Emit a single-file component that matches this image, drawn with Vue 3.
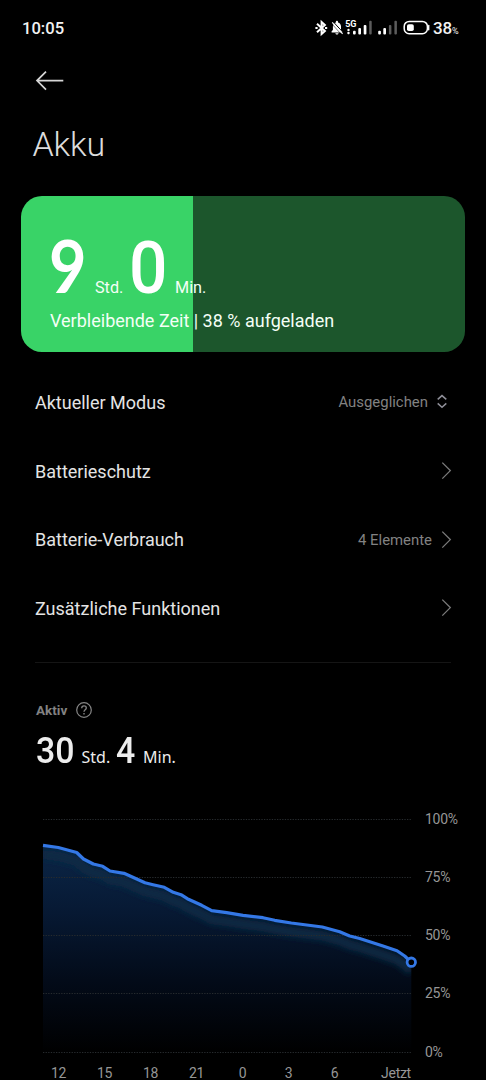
<script setup>
const rows = [
  { label: 'Aktueller Modus', value: 'Ausgeglichen', picker: true },
  { label: 'Batterieschutz', value: '' },
  { label: 'Batterie-Verbrauch', value: '4 Elemente' },
  { label: 'Zusätzliche Funktionen', value: '' },
]

const grid = [
  { y: 20, label: '100%' },
  { y: 78, label: '75%' },
  { y: 136, label: '50%' },
  { y: 194, label: '25%' },
  { y: 253, label: '0%' },
]

const hours = [
  { x: 58.5, label: '12' },
  { x: 104.5, label: '15' },
  { x: 150.5, label: '18' },
  { x: 196.5, label: '21' },
  { x: 242.5, label: '0' },
  { x: 288.5, label: '3' },
  { x: 334.5, label: '6' },
  { x: 396, label: 'Jetzt' },
]

const points = [
  [43, 45.4], [58.3, 47.5], [76.7, 52.5], [83.5, 59], [93.3, 64], [102.7, 66.3],
  [110, 71], [124, 73.3], [145, 82.7], [153, 84.7], [164.3, 87.3], [173.3, 92.3],
  [181, 94.7], [187.3, 98.7], [201.7, 105.3], [211.7, 110.7], [226.7, 112.6],
  [243, 115.3], [263, 117.7], [274.7, 120.3], [291.3, 123], [322.3, 127],
  [339.7, 131.7], [349.7, 136], [359.7, 138.5], [383, 146], [397, 150.7],
  [404.7, 156], [411.3, 162.3],
]
const line = 'M' + points.map((p) => p.join(' ')).join(' L')
const area = line + ' L411.3 253 L43 253 Z'
</script>

<template>
  <main class="screen">
    <header class="status">
      <span class="clock">10:05</span>
      <svg class="status-icons" width="116" height="22" viewBox="0 0 116 22">
        <path d="M2 6.8L9.9 14L6.6 17V5L9.9 8L2 15.2" fill="none" stroke="#fff" stroke-width="2" />
        <path d="M0.4 9.9h2.2v2.2h-2.2zM10 9.9h2.2v2.2h-2.2z" fill="#fff" />
        <path d="M16.6 15.6v-1.4l1.3-1.3V9.6c0-2.3 1.1-3.8 3-4.2V4.8c0-1.4 2.1-1.4 2.1 0v.6c1.9.4 3 1.9 3 4.2v3.3l1.3 1.3v1.4zM20.4 16.2h3.1c0 1.8-3.1 1.8-3.1 0z" fill="#fff" />
        <path d="M18.6 5.2L28 15.4" stroke="#000" stroke-width="1" />
        <path d="M17.2 5.4L27.6 16.8" stroke="#fff" stroke-width="1.1" />
        <path d="M16.4 6.4L25.8 16.8" stroke="#000" stroke-width=".5" />
        <text x="30.2" y="10" class="net">5G</text>
        <g fill="#fff">
          <circle cx="33.5" cy="12.9" r="1.2" />
          <rect x="32.4" y="14.7" width="2.2" height="2.6" rx=".8" />
          <rect x="38" y="13.8" width="2.7" height="3.7" rx="1" />
          <rect x="43.3" y="11" width="2.7" height="6.5" rx="1" />
          <rect x="48.7" y="8" width="2.7" height="9.5" rx="1" />
          <rect x="54.2" y="3.8" width="2.5" height="13.7" rx="1" opacity=".36" />
          <rect x="63.2" y="13.8" width="2.7" height="3.7" rx="1" />
          <rect x="68.3" y="11" width="2.7" height="6.5" rx="1" />
          <rect x="73.9" y="8" width="2.5" height="9.5" rx="1" opacity=".36" />
          <rect x="79.4" y="3.8" width="2.5" height="13.7" rx="1" opacity=".36" />
        </g>
        <rect x="89.2" y="4.4" width="23.2" height="12.4" rx="5" fill="none" stroke="#fff" stroke-width="1.5" />
        <rect x="92" y="7.2" width="6.8" height="6.8" rx="1.8" fill="#fff" />
        <path d="M113.7 8.5v4.2" stroke="#fff" stroke-width="1.4" stroke-linecap="round" />
      </svg>
      <span class="charge">38<small>%</small></span>
    </header>

    <svg class="back" width="30" height="22" viewBox="0 0 30 22">
      <path d="M28.3 10.6H2M11 1.6L2 10.6l9 9" fill="none" stroke="#d6d6d6" stroke-width="1.7" />
    </svg>
    <h1>Akku</h1>

    <section class="battery">
      <p class="remaining">
        <b class="first">9</b><span class="std">Std.</span><b class="second">0</b><span class="min">Min.</span>
      </p>
      <p class="note">Verbleibende Zeit | 38 % aufgeladen</p>
    </section>

    <ul class="rows">
      <li v-for="row in rows" :key="row.label">
        <span class="label">{{ row.label }}</span>
        <span class="value">{{ row.value }}</span>
        <svg v-if="row.picker" class="picker" width="12" height="16" viewBox="0 0 12 16">
          <path d="M1.7 5.4L6 1.6l4.3 3.8M1.7 9.4l4.3 3.8 4.3-3.8" fill="none" stroke="#8f8f99" stroke-width="1.5" />
        </svg>
        <svg v-else class="chevron" width="12" height="18" viewBox="0 0 12 18">
          <path d="M1.3 0.6L9.3 8.6l-8 8" fill="none" stroke="#7b7b7b" stroke-width="1.3" />
        </svg>
      </li>
    </ul>

    <div class="divider"></div>

    <section class="active">
      <h2>
        Aktiv
        <svg width="18" height="18" viewBox="0 0 18 18" fill="none" stroke="#858585">
          <circle cx="9" cy="9" r="7.3" stroke-width="1.2" />
          <path d="M6.7 7.2c0-1.4.9-2.3 2.3-2.3s2.3.9 2.3 2.1c0 1.7-2.3 1.9-2.3 3.8" stroke-width="1.3" />
          <path d="M9 12v1.5" stroke-width="1.4" />
        </svg>
      </h2>
      <p class="duration">
        <b class="days">30</b><span class="std">Std.</span><b class="minutes">4</b><span class="min">Min.</span>
      </p>
    </section>

    <svg class="chart" width="486" height="280" viewBox="0 0 486 280">
      <defs>
        <linearGradient id="fill" gradientUnits="userSpaceOnUse" x1="0" y1="45" x2="0" y2="253">
          <stop offset="0" stop-color="#0b2647" />
          <stop offset=".3" stop-color="#071a35" />
          <stop offset=".65" stop-color="#030b19" />
          <stop offset="1" stop-color="#000" />
        </linearGradient>
        <clipPath id="under"><path :d="area" /></clipPath>
        <filter id="soft" x="-10%" y="-20%" width="120%" height="140%">
          <feGaussianBlur stdDeviation="3" />
        </filter>
      </defs>
      <path :d="area" fill="url(#fill)" />
      <g clip-path="url(#under)">
        <path class="glow" :d="line" transform="translate(0 9)" filter="url(#soft)" />
      </g>
      <g class="grid">
        <path v-for="g in grid" :key="g.y" :d="`M43 ${g.y - 0.5}H412`" />
      </g>
      <path class="curve" :d="line" />
      <circle cx="411.3" cy="162.2" r="4.2" fill="#000" stroke="#3478e6" stroke-width="2.8" />
      <g class="axis">
        <text v-for="g in grid" :key="g.label" x="425" :y="g.y + 3.7">{{ g.label }}</text>
        <text v-for="h in hours" :key="h.label" :x="h.x" y="278" text-anchor="middle">{{ h.label }}</text>
      </g>
    </svg>
  </main>
</template>

<style>
html,
body {
  background: #000;
  overflow: hidden;
}
</style>

<style scoped>
.screen {
  width: 486px;
  height: 1080px;
  overflow: hidden;
  display: flex;
  flex-direction: column;
  background: #000;
  color: #e4e4e4;
  font-family: Roboto, "Liberation Sans", sans-serif;
}
.screen > * {
  flex: none;
}
h1,
h2,
p,
ul {
  margin: 0;
  padding: 0;
  font-weight: 400;
}
.status {
  height: 56px;
  display: flex;
  align-items: center;
  padding-left: 22px;
}
.clock {
  width: 293px;
  color: #f2f2f2;
  font-size: 16.6px;
  font-weight: 500;
}
.status-icons {
  margin-top: -1px;
}
.net {
  fill: #fff;
  font-size: 9px;
  font-weight: 700;
}
.charge {
  margin-left: 2px;
  color: #f2f2f2;
  font-size: 17px;
  font-weight: 500;
  letter-spacing: -0.2px;
}
.charge small {
  font-size: 9px;
  font-weight: 400;
}
.back {
  margin: 14px 0 0 34.5px;
}
h1 {
  height: 46px;
  margin: 29px 0 0 32.5px;
  color: #dcdcdc;
  font-size: 34px;
  font-weight: 300;
  line-height: 46px;
  letter-spacing: -0.2px;
}
.battery {
  width: 415px;
  height: 156px;
  margin: 29px 0 0 21px;
  padding-left: 29px;
  border-radius: 21px;
  background: linear-gradient(90deg, #39d367 172px, #1c562c 172px);
  color: #f4fff6;
}
.remaining {
  height: 112px;
  padding-top: 27px;
  box-sizing: border-box;
  display: flex;
  align-items: baseline;
  font-size: 16.2px;
}
.remaining b {
  color: #fff;
  font-size: 72px;
  font-weight: 500;
  line-height: 84px;
  transform-origin: 0 50%;
}
.remaining .first {
  width: 46px;
  margin-left: -1px;
  font-family: Lato, Roboto, sans-serif;
  font-weight: 700;
  transform: scaleX(0.9);
}
.remaining .std {
  width: 34px;
}
.remaining .second {
  width: 46px;
  transform: scaleX(0.94);
}
.note {
  font-size: 18px;
  line-height: 26px;
}
.rows {
  list-style: none;
  margin: 16px 38px 0 35px;
}
.rows li {
  height: 68.7px;
  display: flex;
  align-items: center;
}
.label {
  flex: 1;
  font-size: 18px;
}
.value {
  color: #828282;
  font-size: 14.9px;
}
.chevron {
  margin-left: 9px;
  margin-right: -5px;
}
.picker {
  margin-left: 8px;
}
.divider {
  height: 1px;
  margin: 19px 35px 0;
  background: #151515;
}
.active {
  margin: 37px 0 0 36px;
  height: 100px;
}
h2 {
  display: flex;
  align-items: center;
  gap: 8px;
  height: 20px;
  color: #828282;
  font-size: 13.5px;
  font-weight: 700;
}
.duration {
  display: flex;
  align-items: baseline;
  margin-top: 9px;
  color: #ededed;
}
.duration b {
  font-size: 36px;
  font-weight: 500;
  line-height: 44px;
  transform-origin: 0 50%;
  transform: scaleX(0.94);
}
.duration .days {
  width: 45.5px;
}
.duration .minutes {
  width: 27.5px;
}
.duration span {
  font-family: "Noto Sans", Roboto, sans-serif;
  font-size: 16px;
}
.duration .std {
  width: 34px;
}
.chart {
  display: block;
}
.glow {
  fill: none;
  stroke: #0e2c44;
  stroke-width: 9;
}
.grid {
  stroke: #272b2e;
  stroke-width: 1;
  stroke-dasharray: 1.3 1.3;
}
.curve {
  fill: none;
  stroke: #3478e6;
  stroke-width: 3.2;
  stroke-linejoin: round;
}
.axis {
  fill: #969696;
  font-size: 14px;
  letter-spacing: -0.3px;
}
</style>
